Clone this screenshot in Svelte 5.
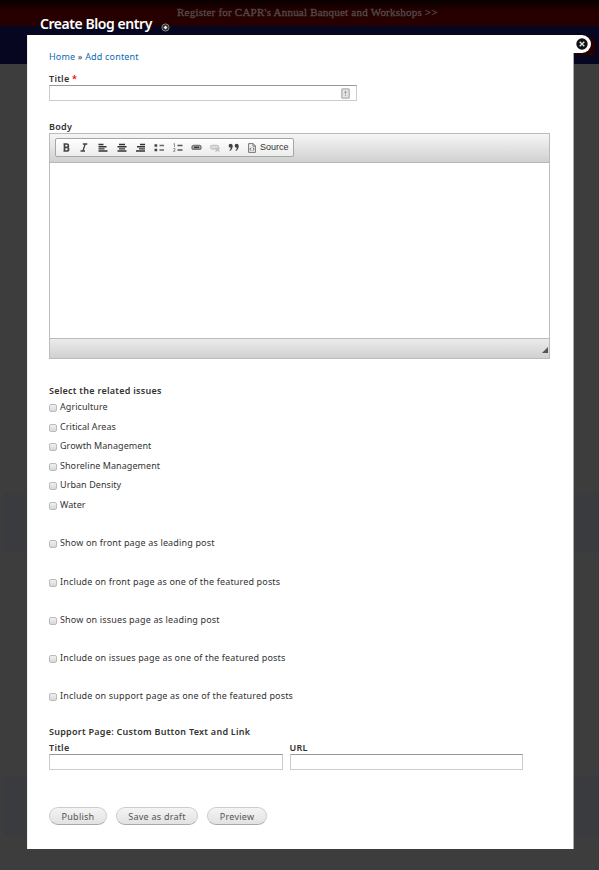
<script>
  const issues = ['Agriculture', 'Critical Areas', 'Growth Management', 'Shoreline Management', 'Urban Density', 'Water'];
  const placements = [
    'Show on front page as leading post',
    'Include on front page as one of the featured posts',
    'Show on issues page as leading post',
    'Include on issues page as one of the featured posts',
    'Include on support page as one of the featured posts'
  ];
</script>

<div class="page">
  <div class="backdrop">
    <div class="banner"><span>Register for CAPR's Annual Banquet and Workshops &gt;&gt;</span></div>
    <div class="nav"><i></i></div>
    <div class="band first"></div>
    <div class="band second"></div>
  </div>

  <div class="overlay">
    <header>
      <h1>Create Blog entry</h1>
      <svg class="add" width="9" height="9" viewBox="0 0 9 9">
        <circle cx="4.5" cy="4.5" r="3.6" fill="#222" stroke="#888" />
        <path d="M4.5 2.7v3.6M2.7 4.5h3.6" stroke="#eee" stroke-width="1.6" />
      </svg>
    </header>

    <main>
      <button class="close" aria-label="Close">
        <svg width="12" height="12" viewBox="0 0 12 12">
          <circle cx="6" cy="6" r="5.7" fill="#111" />
          <path d="M3.7 3.7l4.6 4.6M8.300 3.700L3.700 8.300" stroke="#ddd" stroke-width="1.5" />
        </svg>
      </button>

      <nav class="crumbs"><a href="#home">Home</a> » <a href="#add">Add content</a></nav>

      <div class="label title-label">Title <em>*</em></div>
      <div class="field title-field">
        <svg width="9" height="11" viewBox="0 0 9 11">
          <rect x=".8" y=".8" width="7.4" height="9.4" rx="1" fill="#e4e4e4" stroke="#b0b0b0" stroke-width="1.3" />
          <path d="M4.5 3v2.8M4.5 6.8v1.3M3.4 4.1h2.2" stroke="#999" stroke-width="1" />
        </svg>
      </div>

      <div class="label body-label">Body</div>
      <section class="editor">
        <div class="toolbar">
          <div class="tools">
            <svg class="icons" width="186" height="17" viewBox="0 0 186 17">
              <g fill="none" stroke="#444">
                <path d="M8.500 5v7M7.500 5h3.200a1.600 1.600 0 0 1 0 3.400H9M10.800 8.400a1.800 1.800 0 0 1 0 3.600H7.500" stroke-width="1.700" />
                <path d="M26.800 5h4.500M24.500 12H29M29.200 5l-2.300 7" stroke-width="1.300" />
                <g stroke="#333" stroke-width="1.400">
                  <path d="M42.500 5.500h5M42.500 7.700h8M42.500 9.900h6M42.500 12h9" />
                  <path d="M63 5.500h6M61.500 7.700h9M63 9.900h6M61.500 12h9" />
                  <path d="M84 5.500h5M81 7.700h8M83 9.900h6M80 12h9" />
                </g>
                <path d="M103.500 6.500h4.500M103.500 11h4.500" stroke="#666" stroke-width="1.500" />
                <path d="M98.500 6.500h2.700M98.500 11h2.700" stroke="#444" stroke-width="2.300" />
                <path d="M121.500 6.500h5M121.500 11h5" stroke="#555" stroke-width="1.500" />
                <path d="M117.500 5l1-.5V8M117.300 9.500h1.700v1.300l-1.700 1.400h2" stroke="#777" stroke-width=".8" />
                <rect x="136" y="6.400" width="9" height="4" rx="2" fill="#aaa" stroke="#777" stroke-width="1.400" />
                <path d="M138 8.400h5" stroke="#333" stroke-width="1.500" />
                <rect x="154.500" y="6.400" width="8" height="3.600" rx="1.800" fill="#ddd" stroke="#c6c6c6" stroke-width="1.300" />
                <path d="M159.500 9l4 3.600M163.500 9l-4 3.600" stroke="#bbb" stroke-width="1.200" />
              </g>
              <g fill="#444">
                <circle cx="174.600" cy="6.800" r="2" /><path d="M176.600 6.500c.2 2.600-.8 4.700-3 5.500v-1c1-.8 1.400-1.800 1.100-3z" />
                <circle cx="180.600" cy="6.800" r="2" /><path d="M182.600 6.500c.2 2.600-.8 4.700-3 5.500v-1c1-.8 1.400-1.800 1.100-3z" />
              </g>
            </svg>
            <svg class="doc" width="8" height="10" viewBox="0 0 8 10">
              <path d="M.6.6h4.600l2.200 2.200v6.600H.6zM5 .8v2.400h2.200" fill="#eee" stroke="#777" />
              <path d="M3 4.600L1.900 6.100 3 7.600M5 4.600l1.100 1.500L5 7.600" fill="none" stroke="#555" stroke-width=".9" />
            </svg>
            <span>Source</span>
          </div>
        </div>
        <div class="canvas"></div>
        <div class="status">
          <svg width="6" height="6" viewBox="0 0 6 6"><path d="M6 0v6H0z" fill="#555" /></svg>
        </div>
      </section>

      <div class="label issues-label">Select the related issues</div>
      <div class="issues">
        {#each issues as issue}
          <div class="check"><i></i><span>{issue}</span></div>
        {/each}
      </div>
      <div class="placements">
        {#each placements as placement}
          <div class="check"><i></i><span>{placement}</span></div>
        {/each}
      </div>

      <div class="label support">Support Page: Custom Button Text and Link</div>
      <div class="pair">
        <div><div class="label">Title</div><div class="field"></div></div>
        <div><div class="label">URL</div><div class="field"></div></div>
      </div>

      <div class="actions">
        <button class="publish">Publish</button>
        <button class="draft">Save as draft</button>
        <button class="preview">Preview</button>
      </div>
    </main>
  </div>
</div>

<style>
  .page {
    position: relative;
    height: 870px;
    overflow: hidden;
    background: #3d3d3d;
    font: 9px/12px "Noto Sans", "Open Sans", sans-serif;
    color: #333;
  }
  .page * { box-sizing: border-box; }
  .backdrop { position: absolute; inset: 0; }
  .banner {
    height: 26px;
    padding: 5px 0 0 177px;
    background: linear-gradient(#080000, #260000 11px);
    color: #544b4a;
    font: 11px/15px "Liberation Serif", serif;
    -webkit-text-stroke: .3px #544b4a;
    white-space: nowrap;
    letter-spacing: .22px;
  }
  .nav { height: 38px; background: #060620; display: flex; justify-content: flex-end; padding: 12px 4px 0 0; }
  .nav i { width: 40px; height: 17px; background: #260000; border-radius: 3px; }
  .band { height: 60px; margin: 0 0 0 4px; background: #3a3b3e; }
  .first { margin-top: 429px; }
  .second { margin-top: 224px; }
  .overlay { position: relative; padding: 0 25px 0 27px; }
  header { height: 35px; display: flex; padding: 15px 0 0 13px; }
  h1 { margin: 0; font: 600 14px/18px "Noto Sans", sans-serif; color: #fff; white-space: nowrap; letter-spacing: -.44px; width: 121px; }
  .add { margin-top: 8px; }
  main { position: relative; height: 814px; background: #fff; border-right: 1px solid #aaa; border-left: 1px solid #eee; padding: 16px 21px 0; }
  .close {
    position: absolute;
    top: 0;
    right: -18px;
    width: 18px;
    height: 18px;
    padding: 0 0 0 3px;
    border: 0;
    background: #fff;
    border-radius: 0 9px 9px 0;
  }
  .close svg { display: block; }
  .crumbs { height: 12px; color: #333; white-space: nowrap; letter-spacing: .18px; }
  a { color: #0b6cb5; text-decoration: none; }
  .label { font-weight: 600; white-space: nowrap; height: 12px; letter-spacing: .26px; }
  .title-label { margin-top: 10px; }
  em { color: #f00; font-style: normal; }
  .field { height: 16px; border: 1px solid #ccc; border-top-color: #999; background: #fff; }
  .title-field { width: 308px; display: flex; justify-content: flex-end; align-items: center; padding-right: 6px; }
  .body-label { margin-top: 20px; }
  .editor { width: 501px; height: 226px; border: 1px solid #bbb; display: flex; flex-direction: column; }
  .toolbar { height: 29px; background: linear-gradient(#f5f5f5, #cfd1cf); border-bottom: 1px solid #b6b6b6; padding: 4px 0 0 5px; }
  .tools { width: 239px; height: 19px; border: 1px solid #a6a6a6; border-radius: 2px; background: linear-gradient(#fff, #ececec); display: flex; align-items: center; }
  .icons { flex: none; }
  .doc { margin: 1px 4px 0 6px; flex: none; }
  .tools span { font: 9px/12px "Liberation Sans", Arial, sans-serif; color: #333; padding-bottom: 1px; }
  .canvas { flex: 1; background: #fff; }
  .status { height: 20px; border-top: 1px solid #bbb; background: linear-gradient(#ebebeb, #cfd1cf); display: flex; justify-content: flex-end; align-items: center; padding: 3px 1px 0 0; }
  .issues-label { margin-top: 26px; }
  .issues .check { height: 19.6px; letter-spacing: .06px; }
  .placements { margin-top: 18.7px; }
  .placements .check { height: 38.3px; letter-spacing: .155px; }
  .check { display: flex; padding-top: 4px; white-space: nowrap; }
  .check i { width: 8px; height: 8px; margin: 3px 3px 0 0; border: 1px solid #bbb; border-radius: 2px; background: linear-gradient(#f0f0f0, #d8d8d8); }
  .support { margin-top: 1px; }
  .pair { display: flex; gap: 7px; margin-top: 4px; width: 474px; }
  .pair > div { flex: 1; }
  .actions { display: flex; gap: 9px; margin-top: 37px; }
  .actions button {
    height: 18px;
    padding: 1px 0 0;
    font: 9px/15px "Noto Sans", sans-serif;
    letter-spacing: .25px;
    color: #555;
    white-space: nowrap;
    border: 1px solid #ccc;
    border-bottom-color: #aaa;
    border-radius: 9px;
    background: linear-gradient(#f4f4f4, #e2e2e2);
  }
  .publish { width: 58px; }
  .draft { width: 82px; }
  .preview { width: 60px; }
</style>
